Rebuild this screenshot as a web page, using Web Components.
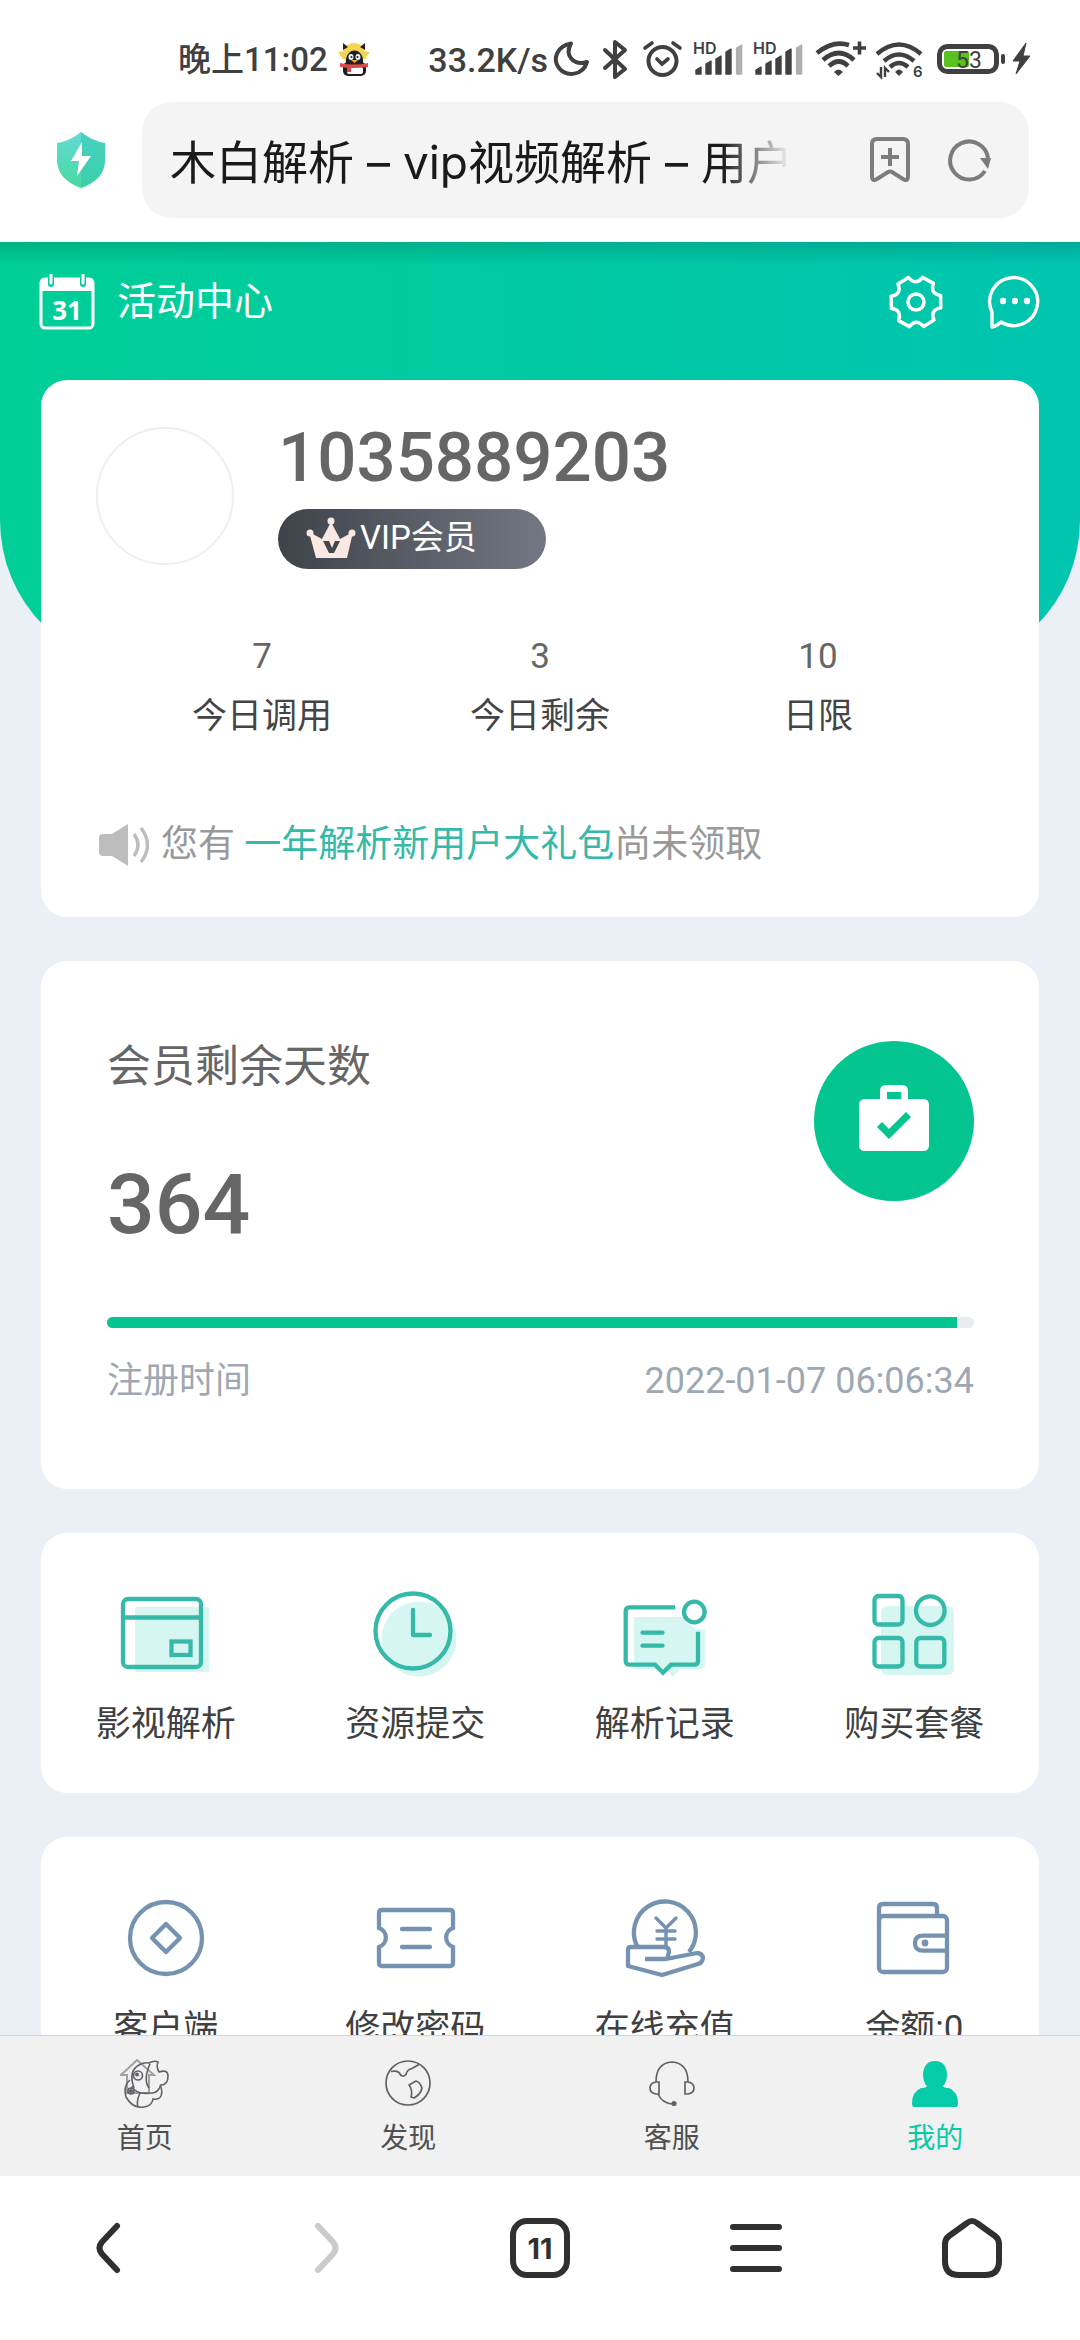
<!DOCTYPE html>
<html lang="zh-CN">
<head>
<meta charset="utf-8">
<meta name="viewport" content="width=device-width, initial-scale=1">
<title>木白解析 – vip视频解析 – 用户</title>
<style>
html, body { margin: 0; height: 100%; background: #fff; }
body { font-family: Roboto, "Noto Sans CJK SC", sans-serif; color: #444; }
</style>
</head>
<body>
<phone-screen></phone-screen>
<script>
const T = '#35b9a8', B = '#7592b0', P = '#d6f6f1';
const signal = `<text x="5" y="24" font-family="Inter" font-weight="600" font-size="16">HD</text>
  <path d="M8 44v-4l5-3v7zM18 44v-10l5-3v13zM28 44v-15l5-3v18zM38 44v-22l5-3v25z" fill="#404040" stroke="#404040" stroke-width="1.4" stroke-linejoin="round"/>
  <path d="M48.600 44v-26l5-3v29z" fill="#b0b0b0" stroke="#b0b0b0" stroke-width="1.400" stroke-linejoin="round"/>`;
// Six flat teeth joined by concave notches.
const polar = (deg, r) => `${(28 + r * Math.sin(deg * Math.PI / 180)).toFixed(1)} ${(28 - r * Math.cos(deg * Math.PI / 180)).toFixed(1)}`;
const gearPath = [0, 1, 2, 3, 4, 5].map(k => `${k ? 'L' : 'M'}${polar(60 * k + 15, 25.5)}L${polar(60 * k + 43, 25.5)}Q${polar(60 * k + 60, 16)} ${polar(60 * k + 75, 25.5)}`).join('') + 'Z';
const ICONS = {
  qq: [32, 36, `<path d="M6 9L16 2l10 7 6 1-5 7H5L0 10z" fill="#f5d44e"/><circle cx="16" cy="12" r="11" fill="#f5d44e"/><path d="M5 1l5 4-5 3zM27 1l-5 4 5 3z" fill="#2b2020"/><rect x="5" y="20" width="23" height="14" rx="5" fill="#241c1c"/><rect x="9" y="25" width="16" height="7" rx="2" fill="#fff"/><path d="M8 22c-2-18 19-18 17 0z" fill="#1e2022"/><ellipse cx="13" cy="15" rx="2.500" ry="3" fill="#e8f2ff"/><ellipse cx="20" cy="15" rx="2.500" ry="3" fill="#e8f2ff"/><circle cx="13.500" cy="15" r="1" fill="#222"/><circle cx="19.500" cy="15" r="1" fill="#222"/><path d="M13 18h7l-3.500 3z" fill="#f2a52c"/><path d="M2 21q14 3 28 0v4q-14 2-28 0z" fill="#dd4a4a"/><path d="M9 24h4v6H9z" fill="#dd4a4a"/>`],
  moon: [46, 60, `<path d="M21 13.500C7 16 2 29 9 38s24 8 28-6c-13 4-23-6-16-18.500z" fill="none" stroke="#404040" stroke-width="4" stroke-linejoin="round"/>`],
  bluetooth: [40, 60, `<path d="M9 20l20 19-10 8V12l10 8L9 38" fill="none" stroke="#404040" stroke-width="4" stroke-linejoin="round" stroke-linecap="round"/>`],
  alarm: [52, 60, `<g fill="none" stroke="#404040" stroke-width="4" stroke-linecap="round"><circle cx="26.500" cy="31" r="14"/><path d="M21 29l5 5 6-5M9 18l7-5M44 18l-7-5" stroke-width="3.600"/></g>`],
  signal: [60, 60, signal],
  wifiplus: [62, 60, `<g fill="none" stroke="#404040" stroke-width="4.600"><path d="M9 23Q25 10 41 15"/><path d="M15 30q16-14 31 0M21 36q10-9 19 0"/><path d="M45 18h13M51.500 11.500v13" stroke-width="3.600"/></g><path d="M26 42q4.500-5 9 0l-4.500 4z" fill="#404040"/>`],
  wifisix: [60, 60, `<g fill="none" stroke="#404040" stroke-width="4.400"><path d="M7 24q22-19 44 0M14 31q15-13 30 0M20 37q9-8 18 0"/><path d="M11 37v10l-4-4M15 47V38l4 4" stroke-width="2.400"/></g><path d="M25 42q4-5 8 0l-4 4z" fill="#404040"/><text x="43" y="47" font-family="Inter" font-weight="600" font-size="15">6</text>`],
  battery: [78, 60, `<rect x="9.500" y="16.500" width="57" height="25" rx="8" fill="none" stroke="#404040" stroke-width="5"/><rect x="14" y="21" width="25" height="16" rx="2" fill="#58c21f"/><rect x="71" y="24" width="4" height="10" rx="2" fill="#404040"/><text x="39" y="37.500" text-anchor="middle" font-family="Roboto" font-size="23" font-weight="400">53</text>`],
  bolt: [28, 60, `<path d="M18 13L5 31h7l-4 13 14-18h-7l3-13z" fill="#404040" stroke="#404040"/>`],
  shield: [50, 56, `<defs><linearGradient id="g" x2="0" y2="1"><stop stop-color="#63dbd6"/><stop offset="1" stop-color="#49d99f"/></linearGradient></defs><path d="M25 0q11 9 24 11v18q-1 19-24 27Q2 48 1 29V11Q14 9 25 0z" fill="url(#g)"/><path d="M25 0q11 9 24 11v18q-1 19-24 27z" fill="#2cc7b0" opacity=".5"/><path d="M26 10L15 29h8l-2 15 14-20h-9z" fill="#fff"/>`],
  bookmark: [42, 48, `<path d="M3 8q0-5 5-5h26q5 0 5 5v32q0 6-5 3l-11-7q-2-1-4 0L8 43q-5 3-5-3zM21 12v18M12 21h18" fill="none" stroke="#7c7c7c" stroke-width="4"/>`],
  refresh: [44, 44, `<path d="M38 33A19 19 0 1 1 41 20" fill="none" stroke="#7c7c7c" stroke-width="4"/><path d="M33 20h11l-3 11z" fill="#7c7c7c"/>`],
  calendar: [56, 56, `<rect x="2" y="5" width="52" height="49" rx="4" fill="none" stroke="#fff" stroke-width="3"/><path d="M2 17V8q0-4 4-4h44q4 0 4 4v9z" fill="#fff"/><path d="M12 1v9M44 1v9" stroke="#04cc9d" stroke-width="6" stroke-linecap="round"/><path d="M12 1v8M44 1v8" stroke="#fff" stroke-width="3" stroke-linecap="round"/><text x="28" y="46" text-anchor="middle" font-family="Noto Sans" font-weight="700" font-size="26" fill="#fff">31</text>`],
  gear: [56, 56, `<path d="${gearPath}" fill="none" stroke="#fff" stroke-width="3.500" stroke-linejoin="round"/><circle cx="28" cy="28" r="8" fill="none" stroke="#fff" stroke-width="3.500"/>`],
  chat: [56, 56, `<path d="M5 53V38a24 24 0 1 1 9 10q-4 4-9 5z" fill="none" stroke="#fff" stroke-width="3.400" stroke-linejoin="round"/><g fill="#fff"><circle cx="16" cy="27" r="3.200"/><circle cx="28" cy="27" r="3.200"/><circle cx="40" cy="27" r="3.200"/></g>`],
  crown: [50, 44, `<g fill="#f9e9e2"><path d="M3 16l13 7 9-17 9 17 13-7-6 26H10z"/><circle cx="4" cy="17" r="3.500"/><circle cx="25" cy="5" r="3.500"/><circle cx="46" cy="17" r="3.500"/></g><path d="M17 25h6l3 7 3-7h5l-6 12h-5z" fill="#43474d"/>`],
  speaker: [50, 44, `<path d="M4 11h9L29 1v42L13 33H4q-4 0-4-4V15q0-4 4-4z" fill="#bdbdbd"/><path d="M35 11q8 11 0 22M42 5q13 17 0 34" fill="none" stroke="#bdbdbd" stroke-width="3.400"/>`],
  briefcase: [70, 66, `<path fill-rule="evenodd" d="M6 14h15V6q0-6 6-6h16q6 0 6 6v8h15q6 0 6 6v40q0 6-6 6H6q-6 0-6-6V20q0-6 6-6zm22 0h14V7H28zM23 37l-5 5 12 12 22-22-5-5-17 17z" fill="#fff"/>`],
  film: [100, 100, `<rect x="19" y="24" width="74" height="65" rx="2" fill="${P}"/><g fill="none" stroke="${T}" stroke-width="4.300"><rect x="7" y="16" width="78" height="68" rx="5"/><path d="M7 34.500h78"/><rect x="55.500" y="58.500" width="19" height="13.500"/></g>`],
  clock: [100, 100, `<circle cx="54" cy="56" r="37.500" fill="${P}"/><g fill="none" stroke="${T}" stroke-width="4.300" stroke-linecap="round" stroke-linejoin="round"><circle cx="48" cy="48" r="37.500"/><path d="M48 27v25h17"/></g>`],
  record: [100, 100, `<path d="M19 34h50q2 11 21 13v35q0 4-4 4H65l-7 8-7-8H22q-3 0-3-3z" fill="${P}"/><g fill="none" stroke="${T}" stroke-width="4.300"><path d="M60 24.300H14.700q-4 0-4 4v49.400q0 4 4 4H40l8 8 8-8h23q4 0 4-4V48.700"/><circle cx="79.300" cy="29" r="10.300"/><path d="M27.500 49.700h20M27.500 62.700h20" stroke-linecap="round"/></g>`],
  package: [100, 100, `<rect x="17" y="23" width="73" height="69" rx="6" fill="${P}"/><g fill="none" stroke="${T}" stroke-width="4.300"><rect x="10.500" y="13" width="28" height="28.500" rx="4"/><rect x="10.500" y="55" width="28" height="28.500" rx="4"/><rect x="52.300" y="55" width="28" height="28.500" rx="4"/><circle cx="66.300" cy="27.700" r="14.300"/></g>`],
  client: [100, 100, `<g fill="none" stroke="${B}" stroke-width="4.300" stroke-linejoin="round"><circle cx="50" cy="51" r="36"/><path d="M50 37l14 14-14 14-14-14z"/></g>`],
  ticket: [100, 100, `<g fill="none" stroke="${B}" stroke-width="4.300" stroke-linecap="round"><path d="M14 41V26q0-3 3-3h68q3 0 3 3v15a10 10 0 0 0 0 19v16q0 3-3 3H17q-3 0-3-3V60a10 10 0 0 0 0-19z" stroke-linecap="butt"/><path d="M37 42h28M37 60h28"/></g>`],
  recharge: [100, 100, `<g fill="none" stroke="${B}" stroke-width="4.300" stroke-linejoin="round"><path d="M22 59A31 31 0 1 1 74 65"/><path d="M41 31l10 10 10-10M51 41v18M42 44h18M42 52h18" stroke-width="3.400" stroke-linecap="round"/><path d="M30 72h21l31-6q5 0 6 5-1 5-5 6L47 88 13 79V63q0-3 3-3h33q5 0 5 5l-2 7"/></g>`],
  wallet: [100, 100, `<g fill="none" stroke="${B}" stroke-width="4.300"><rect x="15" y="29" width="68" height="56" rx="4"/><path d="M15 34V21q0-4 4-4h50q4 0 4 4v8M83 48.700H59q-8 0-8 7.500t8 7.500h24"/></g><circle cx="61" cy="56" r="3.400" fill="${B}"/>`],
  home: [50, 50, `<path d="M1 17L17 2l17 15h-5v18H7V17z" fill="none" stroke="#a0a0a0" stroke-width="2"/><g fill="none" stroke="#606166" stroke-width="1.600"><path d="M14 30Q8 13 19 7q5-3 10-2 5-3 9-1-2 5 1 10 9-3 9 4 0 9-7 9-3 8-9 8-17 2-20-7M30 6q-7 16-1 24"/><path d="M10 22q-7 6-4 17 7 12 18 10 8-1 9-8 6 1 8-3 2-5-1-11M18 49q-2-6 2-14"/><circle cx="18" cy="17.500" r="4.500"/><circle cx="11" cy="33" r="3"/></g><circle cx="17" cy="16.500" r="2" fill="#606166"/><circle cx="11" cy="33" r="2" fill="#606166"/>`],
  globe: [50, 50, `<g fill="none" stroke="#606166" stroke-width="1.700" stroke-linejoin="round"><circle cx="25" cy="25" r="22"/><path d="M8 13.500q5-1 8 1 3 6 7 2 1-5 6-6l7-4M26 27l7-4q4 1 6 7-1 6-8 10l-3-1q2-7-2-12z"/></g>`],
  headset: [50, 50, `<g fill="none" stroke="#606166" stroke-width="1.700"><path d="M9 24q0-19 16-20 16 1 16 20M12 24v12H9q-6-1-6-6t6-6zM38 24v12h3q6-1 6-6t-6-6zM11 36q4 9 14 10"/></g><circle cx="27" cy="45.500" r="2.600" fill="#606166"/>`],
  person: [50, 50, `<path d="M25 3c8 0 12 6 12 14 0 5-2 9-4 11q1 2 6 2 9 4 9 15 0 4-2 4H4q-2 0-2-4 0-11 9-15 5 0 6-2c-2-2-4-6-4-11C13 9 17 3 25 3z" fill="#06cba8"/>`],
  back: [64, 64, `<path d="M41 10L26 26q-5 6 0 12l15 16" fill="none" stroke="#303030" stroke-width="6" stroke-linecap="round"/>`],
  forward: [64, 64, `<path d="M26 10l15 16q5 6 0 12L26 54" fill="none" stroke="#cbcbcb" stroke-width="6" stroke-linecap="round"/>`],
  tabs: [64, 64, `<rect x="5" y="5" width="54" height="54" rx="14" fill="none" stroke="#303030" stroke-width="6"/><text x="32" y="43" text-anchor="middle" font-family="Inter" font-weight="700" font-size="29" fill="#303030">11</text>`],
  menu: [64, 64, `<path d="M9 11h46M9 32h46M9 53h46" stroke="#303030" stroke-width="6" stroke-linecap="round"/>`],
  house: [64, 64, `<path d="M27 7q5-4 10 0l18 13q4 3 4 8v17q0 14-14 14H19Q5 59 5 45V28q0-5 4-8z" fill="none" stroke="#303030" stroke-width="6"/>`]
};
const define = (name, html) => customElements.define(name, class extends HTMLElement {
  connectedCallback() {
    if (this.shadowRoot) return;
    const t = document.createElement('template');
    t.innerHTML = typeof html === 'function' ? html(this) : html;
    this.attachShadow({ mode: 'open' }).append(t.content.cloneNode(true));
  }
});

define('ui-icon', el => {
  const [w, h, body] = ICONS[el.getAttribute('name')];
  return `<style>:host{display:block;flex:none}svg{display:block;fill:#404040}</style>
  <svg width="${w}" height="${h}" viewBox="0 0 ${w} ${h}" aria-hidden="true">${body}</svg>`;
});

define('status-bar', `<style>
  :host{display:flex;align-items:center;height:84px;padding:18px 44px 0 178px;color:#404040;font:400 34px/40px Roboto,"Noto Sans CJK SC",sans-serif;white-space:nowrap}
  .time{margin-right:10px;font-weight:500;font-size:33px}.speed{margin-left:auto;margin-right:2px;font-weight:500}
  .icons{display:flex}
  </style><span class="time">晚上11:02</span><ui-icon name="qq"></ui-icon><span class="speed">33.2K/s</span>
  <div class="icons">${['moon','bluetooth','alarm','signal','signal','wifiplus','wifisix','battery','bolt'].map(n => `<ui-icon name="${n}"></ui-icon>`).join('')}</div>`);

define('address-bar', `<style>
  :host{display:flex;align-items:center;gap:36px;padding:0 51px 24px 56px}
  .field{flex:1;min-width:0;display:flex;align-items:center;height:116px;border-radius:30px;background:#f4f4f4;padding:0 38px 0 28px;box-sizing:border-box}
  input{flex:1;min-width:0;margin-right:72px;border:0;padding:4px 0 0;background:none;outline:0;height:64px;color:#1a1a1a;font:400 46px/64px Inter,"Noto Sans CJK SC",sans-serif;-webkit-mask-image:linear-gradient(90deg,#000 88%,transparent 99%);mask-image:linear-gradient(90deg,#000 88%,transparent 99%)}
  button{border:0;background:none;padding:0;margin-left:36px}button:first-of-type{margin-left:0}
  </style><ui-icon name="shield"></ui-icon><div class="field"><input type="text" aria-label="网址" value="木白解析 – vip视频解析 – 用户">
  <button aria-label="添加书签"><ui-icon name="bookmark"></ui-icon></button><button aria-label="刷新"><ui-icon name="refresh"></ui-icon></button></div>`);

define('hero-header', `<style>
  :host{display:block;padding:32px 37px 340px 39px;border-radius:0 0 150px 150px;background:linear-gradient(#00000022,transparent 24px),linear-gradient(90deg,#00cf97,#00c5b0)}
  div{display:flex;align-items:center;gap:43px}
  a{display:flex;align-items:center;gap:22px;margin-right:auto;color:#fff;text-decoration:none;font-size:39px;line-height:56px}
  button{border:0;background:none;padding:0}
  </style><div><a href="#"><ui-icon name="calendar"></ui-icon><span>活动中心</span></a>
  <button aria-label="设置"><ui-icon name="gear"></ui-icon></button><button aria-label="消息"><ui-icon name="chat"></ui-icon></button></div>`);

define('ui-card', `<style>:host{display:block;background:#fff;border-radius:26px}</style><slot></slot>`);

define('stat-item', el => `<style>:host{flex:1;display:flex;flex-direction:column;align-items:center;gap:16px}
  b{font-weight:400;font-size:35px;line-height:40px;color:#666}span{font-size:35px;line-height:48px}</style>
  <b>${el.getAttribute('value')}</b><span><slot></slot></span>`);

define('profile-panel', `<style>
  :host{display:block;padding:43px 0 46px}
  .top{display:flex;align-items:center;gap:44px;padding:0 55px}
  .avatar{box-sizing:border-box;width:138px;height:138px;border:2px solid #efefef;border-radius:50%}
  .who{display:flex;flex-direction:column;align-items:flex-start;gap:16px}
  h1{margin:0;font-weight:500;font-size:69px;line-height:70px;color:#666}
  .vip{box-sizing:border-box;display:flex;align-items:center;gap:4px;min-width:268px;height:60px;padding:0 28px 2px;border-radius:30px;background:linear-gradient(90deg,#3e434a,#727783);color:#fff;font-size:33px;line-height:40px}
  .stats{display:flex;padding:68px 82px 0}
  .notice{display:flex;align-items:center;gap:12px;margin:78px 58px 0;color:#999;font-size:37px;line-height:52px}
  a{color:#35b9a8;text-decoration:none}
  </style><div class="top"><div class="avatar"></div><div class="who"><h1>1035889203</h1><div class="vip"><ui-icon name="crown"></ui-icon><span>VIP会员</span></div></div></div>
  <div class="stats"><stat-item value="7">今日调用</stat-item><stat-item value="3">今日剩余</stat-item><stat-item value="10">日限</stat-item></div>
  <div class="notice"><ui-icon name="speaker"></ui-icon><span>您有 <a href="#">一年解析新用户大礼包</a>尚未领取</span></div>`);

define('days-panel', `<style>
  :host{display:block;padding:76px 65px 84px 66px}
  .top{display:flex;justify-content:space-between;align-items:flex-start;color:#666}
  h2{margin:0 0 66px;font-weight:400;font-size:44px;line-height:60px}
  b{display:block;font-weight:500;font-size:84px;line-height:84px}
  .badge{box-sizing:border-box;display:flex;align-items:center;justify-content:center;width:160px;height:160px;margin-top:4px;padding-bottom:6px;border-radius:50%;background:#04c58f}
  progress{display:block;width:100%;height:11px;margin:70px 0 29px;border:0;border-radius:6px;overflow:hidden;-webkit-appearance:none;appearance:none;background:#e9edf1}
  progress::-webkit-progress-bar{background:#e9edf1}
  progress::-webkit-progress-value{background:#04c58f}
  .meta{display:flex;justify-content:space-between;color:#9ea8b3;font-size:36px;line-height:48px}
  </style><div class="top"><div><h2>会员剩余天数</h2><b>364</b></div><div class="badge"><ui-icon name="briefcase"></ui-icon></div></div>
  <progress value="98" max="100" aria-label="会员剩余天数"></progress>
  <div class="meta"><span>注册时间</span><time>2022-01-07 06:06:34</time></div>`);

define('action-grid', `<style>:host{display:grid;grid-template-columns:repeat(4,1fr);padding:50px 0 44px}</style><slot></slot>`);
define('action-item', el => `<style>:host{display:block}
  a{display:flex;flex-direction:column;align-items:center;gap:18px;color:#404040;text-decoration:none;font-size:35px;line-height:48px}</style>
  <a href="#"><ui-icon name="${el.getAttribute('icon')}"></ui-icon><span><slot></slot></span></a>`);

define('tab-bar', `<style>:host{display:grid;grid-template-columns:repeat(4,1fr);padding:22px 13px 19px;border-top:1px solid #d6d6d6;background:#f1f1f1}</style><slot></slot>`);
define('tab-item', el => `<style>:host{display:block;color:#505050}:host([active]){color:#06cba8}
  a{display:flex;flex-direction:column;align-items:center;gap:13px;color:inherit;text-decoration:none;font-size:28px;line-height:36px}</style>
  <a href="#"><ui-icon name="${el.getAttribute('icon')}"></ui-icon><span><slot></slot></span></a>`);

define('browser-nav', `<style>:host{display:grid;grid-template-columns:repeat(5,1fr);justify-items:center;padding:40px 0 60px;background:#fff}
  button{border:0;background:none;padding:0}</style>
  ${[['back','后退'],['forward','前进'],['tabs','标签页'],['menu','菜单'],['house','主页']].map(([n, l]) => `<button aria-label="${l}"><ui-icon name="${n}"></ui-icon></button>`).join('')}`);

define('phone-screen', `<style>
  :host{display:flex;flex-direction:column;height:100vh;overflow:hidden}
  main{flex:1;min-height:0;overflow:hidden;background:#ebeff6}
  .cards{display:flex;flex-direction:column;gap:44px;margin-top:-290px;padding:0 41px}
  </style><status-bar></status-bar><address-bar></address-bar>
  <main><hero-header></hero-header><div class="cards">
  <ui-card><profile-panel></profile-panel></ui-card>
  <ui-card><days-panel></days-panel></ui-card>
  <ui-card><action-grid><action-item icon="film">影视解析</action-item><action-item icon="clock">资源提交</action-item><action-item icon="record">解析记录</action-item><action-item icon="package">购买套餐</action-item></action-grid></ui-card>
  <ui-card><action-grid><action-item icon="client">客户端</action-item><action-item icon="ticket">修改密码</action-item><action-item icon="recharge">在线充值</action-item><action-item icon="wallet">余额:0</action-item></action-grid></ui-card>
  </div></main>
  <tab-bar><tab-item icon="home">首页</tab-item><tab-item icon="globe">发现</tab-item><tab-item icon="headset">客服</tab-item><tab-item icon="person" active>我的</tab-item></tab-bar>
  <browser-nav></browser-nav>`);
</script>
</body>
</html>
